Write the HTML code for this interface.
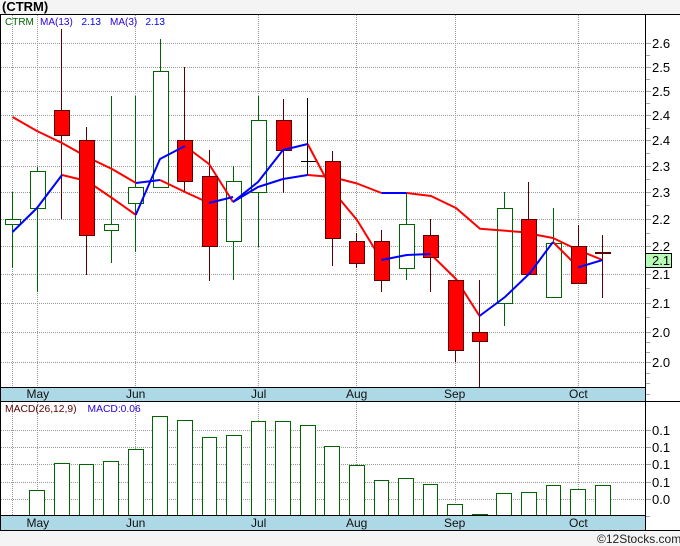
<!DOCTYPE html>
<html><head><meta charset="utf-8"><style>
html,body{margin:0;padding:0;background:#f4f4f4;width:680px;height:546px;overflow:hidden}
svg{display:block}
text{font-family:"Liberation Sans",sans-serif}
</style></head><body>
<svg width="680" height="546" viewBox="0 0 680 546" xmlns="http://www.w3.org/2000/svg">
<rect width="680" height="546" fill="#f4f4f4"/>
<rect x="0" y="14" width="680" height="517" fill="#fff"/>
<text x="2" y="11" font-size="13" font-weight="bold" fill="#000">(CTRM)</text>

<g stroke="#999" stroke-width="1" stroke-dasharray="1 1" shape-rendering="crispEdges" fill="none">
<path d="M12.5 15V387M37.5 15V387M135.5 15V387M258.5 15V387M356.5 15V387M455.5 15V387M578.5 15V387"/>
<path d="M12.5 402V515M37.5 402V515M135.5 402V515M258.5 402V515M356.5 402V515M455.5 402V515M578.5 402V515"/>
<path d="M1 43.5H645M1 67.5H645M1 91.5H645M1 115.5H645M1 140.5H645M1 166.5H645M1 192.5H645M1 219.5H645M1 246.5H645M1 274.5H645M1 303.5H645M1 332.5H645M1 362.5H645"/>
<path d="M1 430.5H645M1 447.5H645M1 464.5H645M1 482.5H645M1 499.5H645"/>
</g>
<g stroke="#a0a0a0" stroke-width="1" shape-rendering="crispEdges" fill="none">
<path d="M646 43.5h5M646 67.5h5M646 91.5h5M646 115.5h5M646 140.5h5M646 166.5h5M646 192.5h5M646 219.5h5M646 246.5h5M646 274.5h5M646 303.5h5M646 332.5h5M646 362.5h5"/>
<path d="M646 55.5h4M646 79.5h4M646 103.5h4M646 128.5h4M646 153.5h4M646 179.5h4M646 205.5h4M646 233.5h4M646 288.5h4M646 317.5h4M646 342.5h4M646 352.5h4M646 373.5h4M646 383.5h4M646 394.5h4"/>
<path d="M646 430.5h5M646 447.5h5M646 464.5h5M646 482.5h5M646 499.5h5M646 516.5h4"/>
</g>

<!-- green wicks -->
<g stroke="#006400" stroke-width="1" fill="none" shape-rendering="crispEdges">
<path d="M12.5 192V268M37.5 167V292M111.5 96V263M135.5 96V252M160.5 39V187M233.5 166V280M258.5 96V247M406.5 193V280M504.5 192V326M553.5 208V297"/>
</g>
<!-- red wicks -->
<g stroke="#5a0000" stroke-width="1" fill="none" shape-rendering="crispEdges">
<path d="M61.5 29V219M86.5 127V275M184.5 67V192M209.5 150V281M283.5 99V193M332.5 151V266M356.5 233V268M381.5 230V292M430.5 219V292M455.5 280V362M479.5 280V387M528.5 182V274M578.5 225V284M602.5 235V298"/>
</g>
<path d="M307.5 98V175M301 161.5H316" stroke="#000" stroke-width="1" fill="none" shape-rendering="crispEdges"/>

<!-- hollow bodies -->
<g fill="#fff" stroke="#006400" stroke-width="1" shape-rendering="crispEdges">
<rect x="5.5" y="219.5" width="15" height="5"/>
<rect x="30.5" y="171.5" width="15" height="37"/>
<rect x="104.5" y="224.5" width="14" height="6"/>
<rect x="128.5" y="187.5" width="15" height="16"/>
<rect x="153.5" y="71.5" width="15" height="116"/>
<rect x="226.5" y="181.5" width="15" height="60"/>
<rect x="251.5" y="120.5" width="15" height="72"/>
<rect x="399.5" y="224.5" width="15" height="44"/>
<rect x="497.5" y="208.5" width="15" height="95"/>
<rect x="546.5" y="243.5" width="15" height="54"/>
</g>

<!-- falling segments (red) -->
<g fill="none" stroke="#ff0000" stroke-width="2" stroke-linejoin="round">
<polyline points="12.5,117 37,131 62,143 87,157 112,169 136,183"/>
<polyline points="160,180 185,192 209,203"/>
<polyline points="307.7,175 332,177 357,183.5 381.5,193"/>
<polyline points="406.7,193 431,196 456,208 480,228.7 521,232 553,238 578,250 602.5,260"/>
<polyline points="62,175 87,181 112,198 136,215"/>
<polyline points="185,146 209,164 233,202"/>
<polyline points="307.7,144 332,190 357,220 381.5,260"/>
<polyline points="430.5,254 456,279 479.5,316"/>
<polyline points="553,242 578,267"/>
</g>

<!-- red bodies -->
<g fill="#ff0000" stroke="#5a0000" stroke-width="1" shape-rendering="crispEdges">
<rect x="54.5" y="110.5" width="15" height="25"/>
<rect x="79.5" y="140.5" width="15" height="95"/>
<rect x="177.5" y="140.5" width="15" height="41"/>
<rect x="202.5" y="176.5" width="15" height="70"/>
<rect x="276.5" y="120.5" width="15" height="30"/>
<rect x="325.5" y="161.5" width="15" height="77"/>
<rect x="349.5" y="241.5" width="15" height="22"/>
<rect x="374.5" y="241.5" width="15" height="39"/>
<rect x="423.5" y="235.5" width="15" height="22"/>
<rect x="448.5" y="280.5" width="15" height="70"/>
<rect x="472.5" y="332.5" width="15" height="9"/>
<rect x="521.5" y="219.5" width="15" height="55"/>
<rect x="571.5" y="246.5" width="15" height="37"/>
</g>
<rect x="595" y="252" width="16" height="2" fill="#5a0000"/>

<!-- rising segments (blue) -->
<g fill="none" stroke="#0000ff" stroke-width="2" stroke-linejoin="round">
<polyline points="12.5,232 37,208 62,175"/>
<polyline points="135.7,215 160,159 185,146"/>
<polyline points="233,202 258,182 283,150 307.7,144"/>
<polyline points="381.5,260 406.7,255 430.5,254"/>
<polyline points="479.5,316 505,297 530,273 553,242"/>
<polyline points="578.3,267.3 602.5,260"/>
<polyline points="136,183 160,180"/>
<polyline points="209,203 233,197"/>
<polyline points="233,202 258,187 283,179 307.7,175"/>
<polyline points="381.5,193 406.7,193"/>
</g>

<!-- MACD bars -->
<g fill="#fff" stroke="#006400" stroke-width="1" shape-rendering="crispEdges">
<rect x="29.5" y="490.5" width="15" height="25"/>
<rect x="54.5" y="463.5" width="15" height="52"/>
<rect x="79.5" y="464.5" width="14" height="51"/>
<rect x="103.5" y="461.5" width="15" height="54"/>
<rect x="128.5" y="449.5" width="15" height="66"/>
<rect x="152.5" y="416.5" width="15" height="99"/>
<rect x="177.5" y="420.5" width="15" height="95"/>
<rect x="202.5" y="437.5" width="14" height="78"/>
<rect x="226.5" y="435.5" width="15" height="80"/>
<rect x="251.5" y="421.5" width="14" height="94"/>
<rect x="275.5" y="421.5" width="15" height="94"/>
<rect x="300.5" y="425.5" width="15" height="90"/>
<rect x="324.5" y="446.5" width="15" height="69"/>
<rect x="349.5" y="465.5" width="15" height="50"/>
<rect x="374.5" y="480.5" width="14" height="35"/>
<rect x="398.5" y="478.5" width="15" height="37"/>
<rect x="423.5" y="484.5" width="14" height="31"/>
<rect x="447.5" y="504.5" width="15" height="11"/>
<rect x="472.5" y="514.5" width="15" height="1"/>
<rect x="496.5" y="493.5" width="15" height="22"/>
<rect x="521.5" y="492.5" width="15" height="23"/>
<rect x="546.5" y="485.5" width="14" height="30"/>
<rect x="570.5" y="489.5" width="15" height="26"/>
<rect x="595.5" y="485.5" width="15" height="30"/>
</g>

<!-- bands -->
<rect x="1" y="388" width="644" height="13" fill="#add8e6"/>
<rect x="1" y="516" width="644" height="14" fill="#add8e6"/>

<!-- frame -->
<g fill="#000" shape-rendering="crispEdges">
<rect x="0" y="14" width="680" height="1"/>
<rect x="0" y="14" width="1" height="517"/>
<rect x="645" y="14" width="1" height="517"/>
<rect x="0" y="387" width="646" height="1"/>
<rect x="0" y="401" width="680" height="1"/>
<rect x="0" y="515" width="646" height="1"/>
<rect x="0" y="530" width="680" height="1"/>
</g>

<!-- legends -->
<g font-size="10">
<text x="5" y="25" fill="#006400">CTRM</text>
<text x="40" y="25" fill="#2a00e0">MA(13)</text>
<text x="81.5" y="25" fill="#0000ff">2.13</text>
<text x="110" y="25" fill="#2a00e0">MA(3)</text>
<text x="145.5" y="25" fill="#0000ff">2.13</text>
</g>
<g font-size="10.3">
<text x="5" y="412" fill="#5a0000">MACD(26,12,9)</text>
<text x="87.5" y="412" fill="#2a00e0">MACD:0.06</text>
</g>

<!-- months -->
<g font-size="12" fill="#111">
<text x="26.5" y="398">May</text><text x="126" y="398">Jun</text><text x="251" y="398">Jul</text><text x="346" y="398">Aug</text><text x="444" y="398">Sep</text><text x="569" y="398">Oct</text>
<text x="26.5" y="527">May</text><text x="126" y="527">Jun</text><text x="251" y="527">Jul</text><text x="346" y="527">Aug</text><text x="444" y="527">Sep</text><text x="569" y="527">Oct</text>
</g>

<!-- price labels -->
<g font-size="13" fill="#000">
<text x="652" y="48">2.6</text><text x="652" y="72">2.5</text><text x="652" y="96">2.5</text><text x="652" y="120">2.4</text><text x="652" y="145">2.4</text><text x="652" y="171">2.3</text><text x="652" y="197">2.3</text><text x="652" y="224">2.2</text><text x="652" y="251">2.2</text><text x="652" y="279">2.1</text><text x="652" y="308">2.1</text><text x="652" y="337">2.0</text><text x="652" y="367">2.0</text>
<text x="652" y="435">0.1</text><text x="652" y="452">0.1</text><text x="652" y="469">0.1</text><text x="652" y="487">0.1</text><text x="652" y="504">0.0</text>
</g>

<!-- last price box -->
<rect x="645.5" y="253.5" width="26" height="14" fill="#b6fcb6" stroke="#000" stroke-width="1" shape-rendering="crispEdges"/>
<text x="652" y="265" font-size="13" fill="#000">2.1</text>

<text x="597" y="543" font-size="12" fill="#222">©12Stocks.com</text>
</svg>
</body></html>
